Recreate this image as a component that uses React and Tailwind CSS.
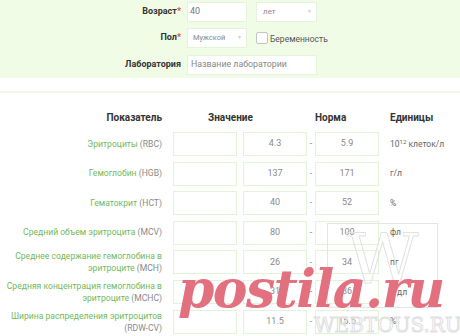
import React from 'react';

const rows = [
  { name: 'Эритроциты', code: '(RBC)', min: '4.3', max: '5.9', unit: 'rbc' },
  { name: 'Гемоглобин', code: '(HGB)', min: '137', max: '171', unit: 'г/л' },
  { name: 'Гематокрит', code: '(HCT)', min: '40', max: '52', unit: '%' },
  { name: 'Средний объем эритроцита', code: '(MCV)', min: '80', max: '100', unit: 'фл' },
  { name: 'Среднее содержание гемоглобина в', name2: 'эритроците', code: '(MCH)', min: '26', max: '34', unit: 'пг' },
  { name: 'Средняя концентрация гемоглобина в', name2: 'эритроците', code: '(MCHC)', min: '31', max: '36', unit: 'г/дл' },
  { name: 'Ширина распределения эритроцитов', name2: '', code: '(RDW-CV)', min: '11.5', max: '15.5', unit: '%' },
];

function Cell({ children }) {
  return (
    <div className="w-[64px] h-[24px] border border-[#e3f3d6] bg-white flex items-center justify-center text-[9px] text-[#8a8a8a]">
      {children}
    </div>
  );
}

function Label({ row }) {
  if (row.name2 === undefined) {
    return (
      <span>
        <span className="text-[#74b957]">{row.name}</span> <span className="text-[#8a8a8a]">{row.code}</span>
      </span>
    );
  }
  return (
    <span className="block leading-[12px]">
      <span className="text-[#74b957]">{row.name}</span>
      <br />
      {row.name2 && <span className="text-[#74b957]">{row.name2} </span>}
      <span className="text-[#8a8a8a]">{row.code}</span>
    </span>
  );
}

export default function App() {
  return (
    <div className="relative w-[460px] h-[336px] overflow-hidden bg-white font-['Roboto',sans-serif]">
      {/* Form header */}
      <div className="h-[78px] bg-[#f1fce7] pt-[2px] flex flex-col gap-[6px]">
        <div className="flex items-center h-[20px]">
          <div className="w-[181px] text-right text-[9px] font-bold text-[#333]">
            Возраст<span className="text-[#e04b4b]">*</span>
          </div>
          <div className="ml-[6px] w-[60px] h-[20px] bg-white border border-[#e6f3dc] flex items-center px-[2px] text-[9px] text-[#777]">40</div>
          <div className="ml-[9px] w-[61px] h-[20px] bg-white border border-[#e6f3dc] flex items-center justify-between pl-[6px] pr-[4px] text-[8px] text-[#888]">
            <span>лет</span>
            <span className="text-[5px] text-[#ccc]">▼</span>
          </div>
        </div>
        <div className="flex items-center h-[20px]">
          <div className="w-[181px] text-right text-[9px] font-bold text-[#333]">
            Пол<span className="text-[#e04b4b]">*</span>
          </div>
          <div className="ml-[6px] w-[60px] h-[20px] bg-white border border-[#e6f3dc] flex items-center justify-between pl-[5px] pr-[4px] text-[7.5px] text-[#888]">
            <span>Мужской</span>
            <span className="text-[5px] text-[#ccc]">▼</span>
          </div>
          <div className="ml-[9px] w-[12px] h-[12px] bg-white border border-[#c4c4c4] rounded-[2px]"></div>
          <span className="ml-[2px] text-[8.5px] text-[#555] mt-[2px]">Беременность</span>
        </div>
        <div className="flex items-center h-[20px] mt-[1px]">
          <div className="w-[181px] text-right text-[9px] font-bold text-[#333]">Лаборатория</div>
          <div className="ml-[6px] w-[130px] h-[20px] bg-white border border-[#e6f3dc] flex items-center px-[3px] text-[8.8px] text-[#888]">
            Название лаборатории
          </div>
        </div>
      </div>

      <div className="h-[13px]"></div>
      <div className="h-[2px] bg-[#f3f4ee]"></div>

      {/* Table */}
      <div className="pt-[17px]">
        <div className="flex items-center h-[14px] text-[10px] font-bold text-[#333]">
          <div className="w-[162px] text-right">Показатель</div>
          <div className="ml-[46px] w-[107px]">Значение</div>
          <div className="w-[75px]">Норма</div>
          <div>Единицы</div>
        </div>
        <div className="mt-[8px] flex flex-col gap-[5.6px]">
          {rows.map((row, i) => (
            <div key={i} className="flex items-center h-[24px]">
              <div className="w-[162px] text-right text-[8.6px] whitespace-nowrap">
                <Label row={row} />
              </div>
              <div className="ml-[11px]">
                <Cell />
              </div>
              <div className="ml-[6px]">
                <Cell>{row.min}</Cell>
              </div>
              <div className="w-[8px] text-center text-[9px] text-[#888]">-</div>
              <Cell>{row.max}</Cell>
              <div className="ml-[11px] text-[8.5px] text-[#666]">
                {row.unit === 'rbc' ? (
                  <span>
                    10<sup className="text-[6px]">12</sup> клеток/л
                  </span>
                ) : (
                  row.unit
                )}
              </div>
            </div>
          ))}
        </div>
      </div>

      {/* Watermarks */}
      <div className="absolute left-[327px] top-[223px] w-[111px] h-[85px] border border-[#e4e4e4] flex items-start justify-center pointer-events-none">
        <span className="font-['DejaVu_Serif',serif] text-[70px] leading-[70px] text-transparent [-webkit-text-stroke:1px_#e2e2e2]">W</span>
      </div>
      <div className="absolute left-[314px] top-[314px] font-['DejaVu_Serif',serif] text-[20px] leading-[22px] text-transparent [-webkit-text-stroke:1px_#e0e0e0] pointer-events-none">
        WEBTOUS.RU
      </div>
      <div className="absolute left-[178px] top-[254px] font-['DejaVu_Serif',serif] font-bold italic text-[52px] leading-[70px] text-[#e3707f] tracking-[-1.5px] pointer-events-none">
        postila.ru
      </div>
    </div>
  );
}
